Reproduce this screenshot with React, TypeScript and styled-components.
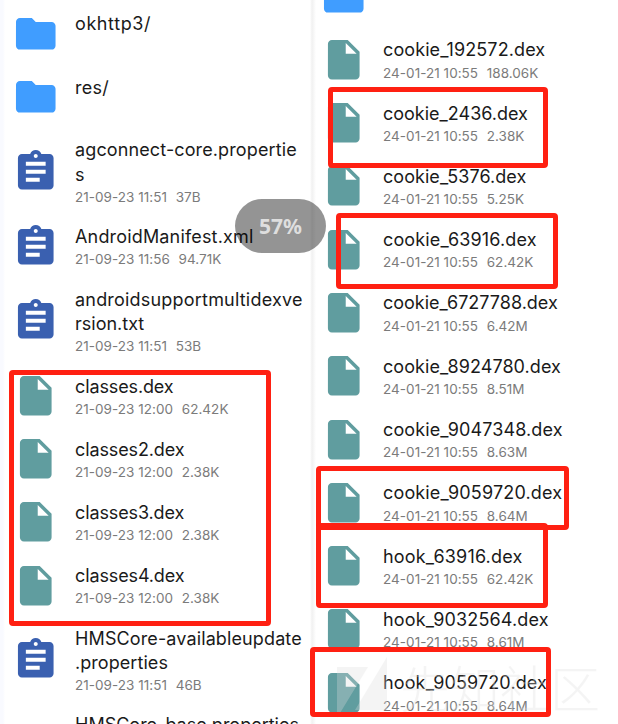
import React from 'react';
import styled, { createGlobalStyle } from 'styled-components';

const GlobalStyle = createGlobalStyle`
  html, body { margin: 0; padding: 0; background: #fff; overflow: hidden; }
`;

const Screen = styled.main`
  position: relative;
  display: grid;
  grid-template-columns: 308px 310px;
  width: 618px;
  height: 724px;
  overflow: hidden;
  background: linear-gradient(90deg, #f9faff 0 3px, #fff 5px 310px, #f1f1f1 312px, #f4f4f4 313px, #fff 316px);
  font-family: Inter, "Noto Sans", sans-serif;
`;

const Panel = styled.section<{ $offset: number }>`
  display: flex;
  flex-direction: column;
  height: 724px;
  overflow: hidden;
  box-sizing: border-box;
  padding-left: 12px;

  &::before {
    content: '';
    flex: none;
    margin-top: ${(p) => p.$offset}px;
  }
`;

const Row = styled.div<{ $tall: boolean; $pitch: number }>`
  flex: none;
  display: flex;
  align-items: center;
  gap: 15.5px;
  height: ${(p) => (p.$tall ? 86.3 : p.$pitch)}px;
`;

const Icon = styled.svg<{ $color: string }>`
  flex: none;
  width: 47.5px;
  height: 47.5px;
  fill: ${(p) => p.$color};
`;

const Info = styled.div<{ $tall: boolean }>`
  padding-top: ${(p) => (p.$tall ? 3 : 2.6)}px;
  white-space: pre;
`;

const Title = styled.div<{ $tracking: number }>`
  font-size: 18px;
  line-height: 24.3px;
  letter-spacing: ${(p) => p.$tracking}px;
  color: #1a1a1a;
`;

const Meta = styled.div`
  display: flex;
  gap: 8.6px;
  height: 20.8px;
  font-size: 13.5px;
  line-height: 20.8px;
  letter-spacing: 0.04px;
  color: #7b7b7b;
`;

const Progress = styled.div`
  position: absolute;
  left: 235px;
  top: 199px;
  width: 91px;
  height: 54px;
  border-radius: 27px;
  background: rgba(0, 0, 0, 0.42);
  color: #dedede;
  font: 700 21px/54px "Noto Sans", sans-serif;
  text-align: center;
`;

const Mark = styled.div<{ $x: number; $y: number; $w: number; $h: number }>`
  position: absolute;
  left: ${(p) => p.$x}px;
  top: ${(p) => p.$y}px;
  width: ${(p) => p.$w}px;
  height: ${(p) => p.$h}px;
  box-sizing: border-box;
  border: 5px solid #ff2012;
  border-radius: 4px;
`;

const Watermark = styled.div`
  position: absolute;
  left: 337px;
  top: 657px;
  display: flex;
  align-items: center;
  gap: 12px;
  height: 62px;
  opacity: 0.3;
  color: #dedede;
  font: 300 50px/58px "Noto Sans CJK SC", sans-serif;
  white-space: nowrap;

  svg { fill: currentColor; }
  span { margin-top: -4px; }
`;

type Kind = 'folder' | 'text' | 'dex';

interface Entry {
  kind: Kind;
  lines: [string, number][];
  date?: string;
  size?: string;
}

const icons: Record<Kind, { color: string; d: string }> = {
  folder: {
    color: '#409dff',
    d: 'M10 4H4c-1.1 0-1.99.9-1.99 2L2 18c0 1.1.9 2 2 2h16c1.1 0 2-.9 2-2V8c0-1.1-.9-2-2-2h-8l-2-2z',
  },
  text: {
    color: '#3a60b0',
    d: 'M19 3h-4.18C14.4 1.84 13.3 1 12 1c-1.3 0-2.4.84-2.82 2H5c-1.1 0-2 .9-2 2v14c0 1.1.9 2 2 2h14c1.1 0 2-.9 2-2V5c0-1.1-.9-2-2-2zm-7 0c.55 0 1 .45 1 1s-.45 1-1 1-1-.45-1-1 .45-1 1-1zm2 14H7v-2h7v2zm3-4H7v-2h10v2zm0-4H7V7h10v2z',
  },
  dex: {
    color: '#609d9f',
    d: 'M6 2c-1.1 0-1.99.9-1.99 2L4 20c0 1.1.89 2 1.99 2H18c1.1 0 2-.9 2-2V8l-6-6H6zm7 7V3.5L18.5 9H13z',
  },
};

const archive: Entry[] = [
  { kind: 'folder', lines: [['okhttp3/', 0.6]] },
  { kind: 'folder', lines: [['res/', 0.3]] },
  { kind: 'text', lines: [['agconnect-core.propertie', 0.12], ['s', 0]], date: '21-09-23 11:51', size: '37B' },
  { kind: 'text', lines: [['AndroidManifest.xml', 0.17]], date: '21-09-23 11:56', size: '94.71K' },
  { kind: 'text', lines: [['androidsupportmultidexve', 0.2], ['rsion.txt', 0]], date: '21-09-23 11:51', size: '53B' },
  { kind: 'dex', lines: [['classes.dex', -0.12]], date: '21-09-23 12:00', size: '62.42K' },
  { kind: 'dex', lines: [['classes2.dex', -0.12]], date: '21-09-23 12:00', size: '2.38K' },
  { kind: 'dex', lines: [['classes3.dex', -0.12]], date: '21-09-23 12:00', size: '2.38K' },
  { kind: 'dex', lines: [['classes4.dex', -0.12]], date: '21-09-23 12:00', size: '2.38K' },
  { kind: 'text', lines: [['HMSCore-availableupdate', 0.12], ['.properties', 0.06]], date: '21-09-23 11:51', size: '46B' },
  { kind: 'text', lines: [['HMSCore-base.properties', 0], ['', 0]] },
];

const dex = (name: string, tracking: number, size: string): Entry => ({
  kind: 'dex',
  lines: [[name, tracking]],
  date: '24-01-21 10:55',
  size,
});

const dumped: Entry[] = [
  { kind: 'folder', lines: [['', 0]] },
  dex('cookie_192572.dex', 0.1, '188.06K'),
  dex('cookie_2436.dex', 0, '2.38K'),
  dex('cookie_5376.dex', 0.05, '5.25K'),
  dex('cookie_63916.dex', 0.14, '62.42K'),
  dex('cookie_6727788.dex', 0, '6.42M'),
  dex('cookie_8924780.dex', 0.07, '8.51M'),
  dex('cookie_9047348.dex', 0.11, '8.63M'),
  dex('cookie_9059720.dex', 0.15, '8.64M'),
  dex('hook_63916.dex', 0.18, '62.42K'),
  dex('hook_9032564.dex', 0.15, '8.61M'),
  dex('hook_9059720.dex', 0.13, '8.64M'),
];

const marks = [
  [9, 369.5, 262, 256.6],
  [327.5, 86.5, 220.6, 81.2],
  [335.7, 212.5, 222.3, 76],
  [315.7, 465.5, 253.3, 64.5],
  [315.7, 522.7, 232.4, 85.6],
  [309.5, 647.3, 241.5, 70],
];

function FileList({ entries, offset, pitch }: { entries: Entry[]; offset: number; pitch: number }) {
  return (
    <Panel $offset={offset}>
      {entries.map(({ kind, lines, date, size }, i) => {
        const tall = lines.length > 1;
        return (
          <Row key={i} $tall={tall} $pitch={pitch}>
            <Icon viewBox="0 0 24 24" $color={icons[kind].color}>
              <path fillRule="evenodd" d={icons[kind].d} />
            </Icon>
            <Info $tall={tall}>
              {lines.map(([text, tracking], n) => (
                <Title key={n} $tracking={tracking}>{text || '\u00a0'}</Title>
              ))}
              <Meta>
                <span>{date}</span>
                <span>{size}</span>
              </Meta>
            </Info>
          </Row>
        );
      })}
    </Panel>
  );
}

export default function App() {
  return (
    <>
      <GlobalStyle />
      <Screen>
        <FileList entries={archive} offset={2} pitch={63.2} />
        <FileList entries={dumped} offset={-35.4} pitch={63.3} />
        <Progress>57%</Progress>
        <Watermark>
          <svg width="51" height="62" viewBox="0 0 51 62">
            <path d="M0 10H31L0 61zM50 0V53H18z" />
          </svg>
          <span>先知社区</span>
        </Watermark>
        {marks.map(([x, y, w, h]) => (
          <Mark key={y} $x={x} $y={y} $w={w} $h={h} />
        ))}
      </Screen>
    </>
  );
}
